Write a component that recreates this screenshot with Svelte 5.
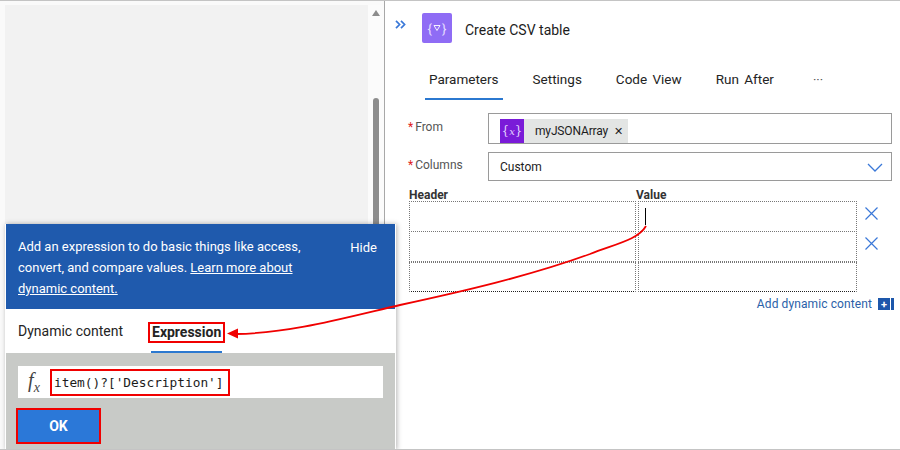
<script lang="ts">
	const tabs = ['Parameters', 'Settings', 'Code View', 'Run After'];
	const rows = [true, true, false];
</script>

<div class="page">
	<aside class="canvas">
		<div class="canvas-fill"></div>
		<div class="scrollbar">
			<span class="scroll-up"></span>
			<span class="scroll-thumb"></span>
		</div>
	</aside>

	<main class="pane">
		<header class="head">
			<svg class="collapse" viewBox="0 0 11 9" width="11" height="9">
				<path d="M1 .8l3.6 3.7L1 8.200M6 .8l3.600 3.700L6 8.200" fill="none" stroke="#3a78d8" stroke-width="1.700" />
			</svg>
			<div class="action-icon">
				<span class="brace">&#123;</span>
				<svg viewBox="0 0 8 8" width="8" height="8"><path d="M1 1.500h6L4 6.500z" fill="none" stroke="#fff" stroke-width="0.9" /></svg>
				<span class="brace">&#125;</span>
			</div>
			<h1>Create CSV table</h1>
		</header>

		<nav class="tabs">
			{#each tabs as tab, i}
				<span class="tab" class:active={i === 0}>{tab}</span>
			{/each}
			<span class="more">···</span>
		</nav>

		<div class="form">
			<div class="field from">
				<span class="label"><i>*</i>From</span>
				<div class="input">
					<span class="token">
						<span class="token-icon">&#123;<em>x</em>&#125;</span>
						<span class="token-text">myJSONArray</span>
						<span class="token-x">✕</span>
					</span>
				</div>
			</div>
			<div class="field columns">
				<span class="label"><i>*</i>Columns</span>
				<div class="input select">
					<span>Custom</span>
					<svg viewBox="0 0 16 9" width="16" height="9"><path d="M1 1l7 7 7-7" fill="none" stroke="#3a78d8" stroke-width="1.300" /></svg>
				</div>
			</div>

			<div class="table-head">
				<span class="col-h">Header</span>
				<span>Value</span>
			</div>
			<div class="rows">
				{#each rows as removable, i}
					<div class="row">
						<div class="cell left"></div>
						<div class="cell right">
							{#if i === 0}<span class="caret"></span>{/if}
						</div>
						{#if removable}
							<svg class="remove" viewBox="0 0 13 13" width="13" height="13"><path d="M.5.5l12 12M12.500.5l-12 12" fill="none" stroke="#3a78d8" stroke-width="1.200" /></svg>
						{/if}
					</div>
				{/each}
			</div>
			<div class="add">
				<span>Add dynamic content</span>
				<span class="add-plus">+</span>
				<span class="add-bar"></span>
			</div>
		</div>
	</main>

	<section class="popover">
		<div class="banner">
			<div class="banner-text">
				<p>Add an expression to do basic things like access,</p>
				<p>convert, and compare values. <a href="#top">Learn more about</a></p>
				<p><a href="#top">dynamic content.</a></p>
			</div>
			<span class="hide">Hide</span>
		</div>
		<div class="pop-tabs">
			<span class="pop-tab">Dynamic content</span>
			<span class="pop-tab expr"><b class="outlined">Expression</b></span>
		</div>
		<div class="pop-body">
			<div class="expr-bar">
				<span class="fx">f<sub>x</sub></span>
				<span class="expr-text outlined">item()?['Description']</span>
			</div>
			<div class="ok-wrap outlined"><button>OK</button></div>
		</div>
	</section>

	<svg class="callout" viewBox="0 0 900 450" width="900" height="450">
		<path d="M646 226C638 240 615 244 590 254C530 276 460 292 400 305C340 319 290 333 236 334" fill="none" stroke="#f00000" stroke-width="1.800" />
		<path d="M227 333.500l11-5v10z" fill="#f00000" />
	</svg>
</div>

<style>
	:global(body) {
		margin: 0;
	}

	.page {
		position: relative;
		display: flex;
		width: 900px;
		height: 450px;
		box-sizing: border-box;
		overflow: hidden;
		background: #fff;
		border-top: 1px solid #c4c4c4;
		border-bottom: 1px solid #c4c4c4;
		font-family: Roboto, "Liberation Sans", sans-serif;
		color: #242424;
	}

	.canvas {
		display: flex;
		flex: none;
		width: 385px;
		padding: 4px 0 0 5px;
		box-sizing: border-box;
		background: #fafafa;
		border-right: 1px solid #a8a8a8;
	}

	.canvas-fill {
		flex: 1;
		background: #f2f2f2;
	}

	.scrollbar {
		display: flex;
		flex: none;
		flex-direction: column;
		align-items: center;
		width: 16px;
		background: #fbfbfb;
	}

	.scroll-up {
		width: 0;
		height: 0;
		margin-top: 5px;
		border: 4px solid transparent;
		border-top: 0;
		border-bottom: 6px solid #8c8c8c;
	}

	.scroll-thumb {
		width: 6px;
		height: 130px;
		margin-top: 82px;
		border-radius: 3px 3px 0 0;
		background: #8d8d8d;
	}

	.pane {
		flex: 1;
		min-width: 0;
	}

	.head {
		display: flex;
		align-items: center;
		height: 56px;
		padding-left: 10px;
		box-sizing: border-box;
	}

	.collapse {
		margin: -10px 16px 0 0;
	}

	.action-icon {
		display: flex;
		align-items: center;
		justify-content: center;
		gap: 1px;
		width: 30px;
		height: 30px;
		margin-top: -2px;
		border-radius: 2px;
		background: #8f6cf5;
		color: #e4dcff;
		font-size: 13px;
	}

	h1 {
		margin: 2px 0 0 13px;
		font-size: 14px;
		font-weight: 400;
		color: #1c1c1c;
	}

	.tabs {
		display: flex;
		align-items: flex-start;
		height: 56px;
		padding: 12px 0 0 40px;
		box-sizing: border-box;
		font-size: 13.500px;
		word-spacing: 2px;
	}

	.tab {
		height: 31px;
		margin-right: 26px;
		padding: 2px 4px 0;
		box-sizing: border-box;
		border-bottom: 2px solid transparent;
	}

	.tab.active {
		border-bottom-color: #2b78d0;
	}

	.more {
		margin: 3px 0 0 9px;
		color: #555;
		font-size: 13px;
	}

	.form {
		width: 484px;
		padding-left: 23px;
		font-size: 12px;
	}

	.field {
		display: flex;
	}

	.field.from {
		height: 39px;
	}

	.field.columns {
		height: 36px;
	}

	.label {
		flex: none;
		width: 80px;
		padding-top: 7px;
		color: #555;
	}

	.columns .label {
		padding-top: 6px;
	}

	.label i {
		margin-right: 2px;
		color: #e02020;
		font-style: normal;
	}

	.input {
		display: flex;
		align-items: flex-start;
		flex: 1;
		height: 31px;
		padding-left: 11px;
		box-sizing: border-box;
		border: 1px solid #9a9a9a;
		background: #fff;
	}

	.columns .input {
		height: 29px;
	}

	.select {
		align-items: center;
		justify-content: space-between;
		padding-right: 8px;
		color: #1c1c1c;
	}

	.select svg {
		margin-top: 2px;
	}

	.token {
		display: flex;
		align-items: center;
		width: 128px;
		height: 24px;
		margin-top: 5px;
		background: #e3e5e4;
		color: #1c1c1c;
	}

	.token-icon {
		display: flex;
		flex: none;
		align-items: center;
		justify-content: center;
		width: 24px;
		height: 24px;
		background: #7a1bd8;
		color: #e2d2ff;
		font-size: 12px;
		font-family: "DejaVu Serif", serif;
	}

	.token-icon em {
		font-size: 10px;
	}

	.token-text {
		margin-left: 11px;
		letter-spacing: -0.15px;
	}

	.token-x {
		margin-left: 6px;
		font-size: 11px;
	}

	.table-head {
		display: flex;
		height: 13px;
		margin-left: 1px;
		font-weight: 700;
		line-height: 14px;
		color: #333;
	}

	.col-h {
		width: 227px;
	}

	.rows {
		display: flex;
		flex-direction: column;
	}

	.row {
		display: flex;
		height: 31px;
		margin-bottom: -1px;
		margin-left: 1px;
	}

	.row:nth-child(2) {
		margin-bottom: 0;
	}

	.row:last-child {
		height: 30px;
		margin-bottom: 0;
	}

	.row:last-child .cell {
		border-bottom-color: #222;
	}

	.cell {
		height: 100%;
		box-sizing: border-box;
		border: 1px dotted #777;
	}

	.left {
		width: 227px;
		margin-right: 2px;
	}

	.right {
		width: 219px;
		padding: 6px;
	}

	.caret {
		display: block;
		width: 1px;
		height: 17px;
		background: #000;
	}

	.remove {
		margin: 6px 0 0 8px;
	}

	.add {
		display: flex;
		align-items: center;
		justify-content: flex-end;
		margin-top: 5px;
		margin-right: -2px;
		color: #2b5fa8;
		letter-spacing: 0.1px;
	}

	.add-plus {
		display: flex;
		align-items: center;
		justify-content: center;
		width: 12px;
		height: 12px;
		margin-left: 6px;
		background: #1d57ab;
		color: #fff;
		font-weight: 700;
		font-size: 11px;
		line-height: 1;
	}

	.add-bar {
		width: 3px;
		height: 12px;
		margin-left: 1px;
		background: #1d57ab;
	}

	.popover {
		position: absolute;
		left: 5px;
		top: 223px;
		width: 391px;
		height: 226px;
		display: flex;
		flex-direction: column;
		padding: 0 1px;
		box-sizing: border-box;
		background: #fff;
		box-shadow: 1px 0 5px rgba(0, 0, 0, 0.3);
	}

	.banner {
		display: flex;
		flex: none;
		justify-content: space-between;
		height: 85px;
		padding: 12px 18px 0 12px;
		box-sizing: border-box;
		background: #1f5aad;
		color: #fff;
		font-size: 13px;
		line-height: 21px;
	}

	.banner p {
		margin: 0;
	}

	.banner a {
		color: #fff;
	}

	.hide {
		margin-top: 1px;
	}

	.pop-tabs {
		display: flex;
		flex: none;
		height: 44px;
		font-size: 14px;
	}

	.pop-tab {
		padding-top: 14px;
		margin-left: 12px;
	}

	.expr {
		height: 44px;
		margin-left: 28px;
		padding: 13px 0 0;
		box-sizing: border-box;
		border-bottom: 2px solid #2b78d0;
	}

	.expr b {
		display: block;
		margin: 0 -3px;
		padding: 0 4px;
		font-size: 14px;
		line-height: 21px;
	}

	.outlined {
		outline: 2px solid #f00000;
		outline-offset: -2px;
	}

	.pop-body {
		flex: 1;
		padding: 13px 12px 0;
		background: #c8cac7;
	}

	.expr-bar {
		display: flex;
		align-items: center;
		height: 32px;
		background: #fff;
	}

	.fx {
		width: 32px;
		text-align: center;
		font-family: "Liberation Serif", serif;
		font-style: italic;
		font-size: 20px;
		color: #444;
	}

	.fx sub {
		font-size: 14px;
	}

	.expr-text {
		padding: 5px 6px 5px 4px;
		font-family: "DejaVu Sans Mono", monospace;
		font-size: 12.800px;
		line-height: 17px;
		color: #1c1c1c;
	}

	.ok-wrap {
		width: 85px;
		height: 36px;
		margin: 10px 0 0 -2px;
		padding: 2px;
		box-sizing: border-box;
	}

	.ok-wrap button {
		display: block;
		width: 100%;
		height: 100%;
		border: 0;
		background: #2b78d8;
		color: #fff;
		font: 700 14px Roboto, sans-serif;
	}

	.callout {
		position: absolute;
		left: 0;
		top: -1px;
		pointer-events: none;
	}
</style>
